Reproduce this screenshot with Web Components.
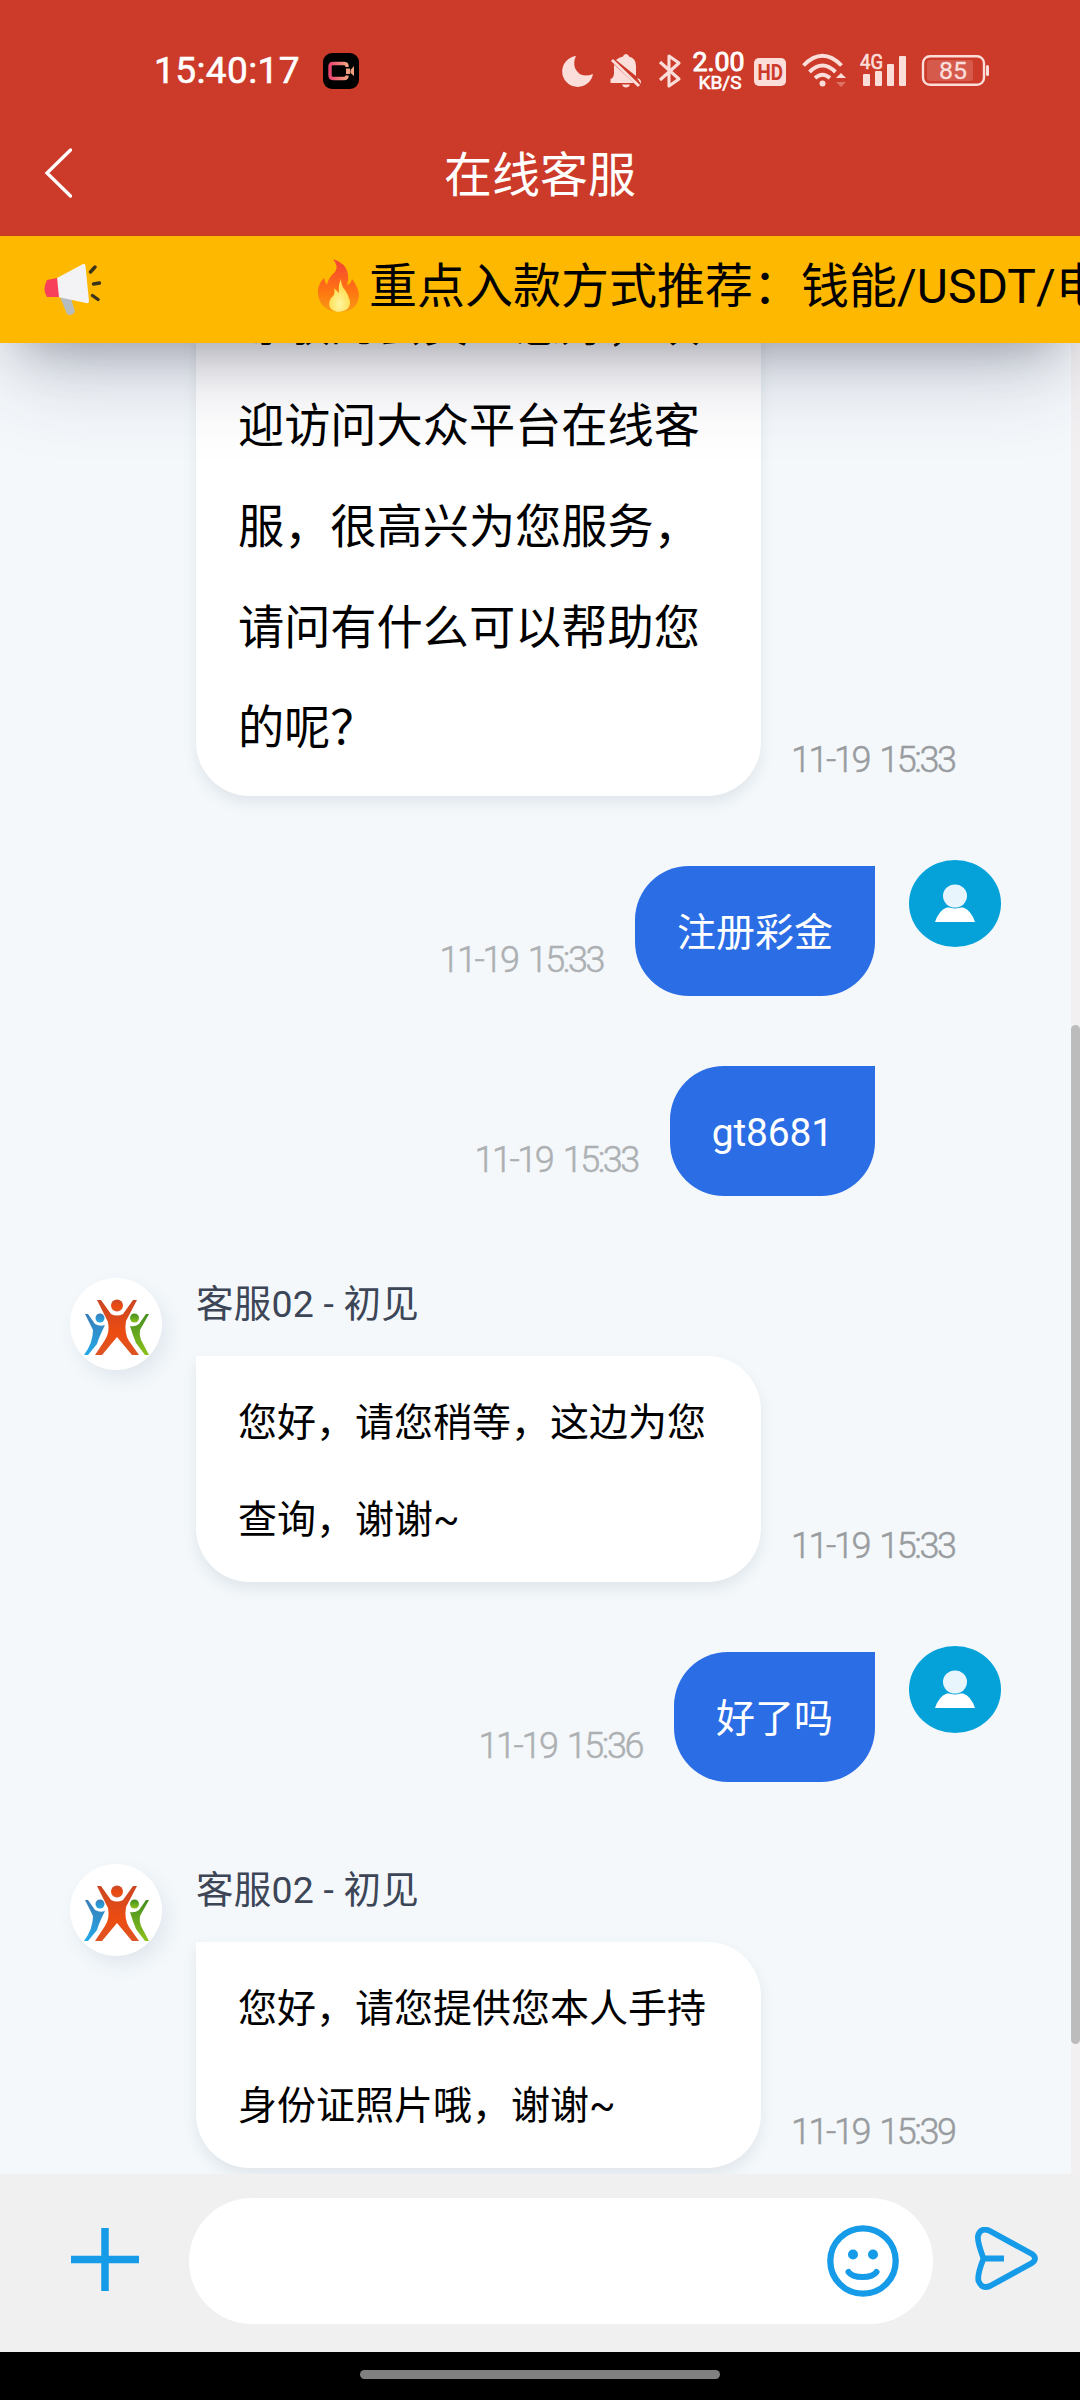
<!DOCTYPE html>
<html lang="zh-CN">
<head>
<meta charset="utf-8">
<title>在线客服</title>
<style>
html,body{margin:0;padding:0;height:2400px;overflow:hidden;background:#f4f8fb}
body{font-family:Roboto,"Noto Sans CJK SC",sans-serif}
</style>
</head>
<body>
<chat-app></chat-app>
<script>
const define = (name, html) => {
  const t = document.createElement('template');
  t.innerHTML = html;
  customElements.define(name, class extends HTMLElement {
    constructor() {
      super();
      this.attachShadow({mode: 'open'}).append(t.content.cloneNode(true));
    }
  });
};

define('status-bar', `<style>
:host{display:flex;height:108px;padding:0 88px 0 154px;box-sizing:border-box;align-items:flex-start;color:#fff}
.clock{margin-top:50px;width:169px;flex:none;font:400 37px/42px Roboto;letter-spacing:.4px;-webkit-text-stroke:.6px #fff}
svg{display:block;overflow:visible;flex:none}
text{font-family:Roboto,sans-serif}
.rec{margin-top:53px}
.right{margin-left:204px;margin-top:53px;flex:none}
</style>
<div class="clock">15:40:17</div>
<svg class="rec" width="36" height="36" viewBox="0 0 36 36"><defs><linearGradient id="g" x2="1" y2="0"><stop stop-color="#e8446f"/><stop offset="1" stop-color="#f3a483"/></linearGradient></defs><rect width="36" height="36" rx="9"/><path d="M24 14V13Q24 10.500 21 10.500H10Q7 10.500 7 13.500V22Q7 25.500 10 25.500H21Q24 25.500 24 22.500" fill="none" stroke="url(#g)" stroke-width="3.400"/><path d="M23 15.500H27V21H23ZM27.500 17L31 13V23L27.500 20Z" fill="#f0a080"/></svg>
<svg class="right" width="427" height="36" viewBox="563 53 427 36" fill="#fbdeda">
<path d="M576 56A15.500 15.500 0 1 0 593 74Q580 79 575 68Q573 62 576 56Z"/>
<path d="M616 60Q619 57 623 56.500Q623.500 54 626 54Q628.500 54 629 56.500Q636 58 636 66V76ZM613.500 64L634 83H610.500V79Q614 78 614 73V64ZM637 78Q641 79 641 82V84ZM622 84.500H630Q629 87.500 626 87.500Q623 87.500 622 84.500Z"/>
<path d="M612 60L639 86" stroke="#fbdeda" stroke-width="3"/>
<path d="M660 62L679 79L669 86V56L679 63L660 80" fill="none" stroke="#fbdeda" stroke-width="3.100" stroke-linejoin="round"/>
<g fill="#fff" stroke="#fff" stroke-width=".9"><text x="692.500" y="71" font-size="25.500" textLength="52" lengthAdjust="spacingAndGlyphs">2.00</text><text x="698.500" y="88.500" font-size="18.500" stroke-width=".6" textLength="43" lengthAdjust="spacingAndGlyphs">KB/S</text></g>
<rect x="754" y="58" width="32" height="28" rx="5"/>
<text x="757.500" y="80" font-size="22.500" font-weight="700" fill="#cc3a29" textLength="25.500" lengthAdjust="spacingAndGlyphs">HD</text>
<g fill="none" stroke="#fbdeda" stroke-width="3.900"><path d="M803.500 65.500Q822.500 46 841.500 65.500"/><path d="M809.500 72Q822.500 59 835.500 72"/><path d="M815 78Q822.500 71.500 830 78"/></g>
<circle cx="822.500" cy="83.500" r="3"/><path d="M836 78L841 73L846 78Z"/><path d="M836 82H846L841 87Z" opacity=".35"/>
<text x="860" y="69" font-size="21" stroke="#fbdeda" stroke-width=".7" textLength="23" lengthAdjust="spacingAndGlyphs">4G</text>
<rect x="863" y="74" width="7" height="12" rx="1"/><rect x="875" y="71" width="7" height="15" rx="1"/><rect x="887" y="64" width="7" height="22" rx="1"/><rect x="899" y="56" width="7" height="30" rx="1"/>
<rect x="923" y="56.200" width="61" height="28.600" rx="7" fill="none" stroke="#fbdeda" stroke-width="2.400"/>
<rect x="927" y="60" width="46" height="21" rx="3" opacity=".2"/>
<rect x="986" y="65" width="3" height="11" rx="1.500"/>
<text x="939" y="79" font-size="24" textLength="28" lengthAdjust="spacingAndGlyphs" stroke="#fbdeda" stroke-width=".3">85</text>
</svg>`);

define('title-bar', `<style>
:host{display:grid;grid-template-columns:120px 1fr 120px;align-items:center;height:128px;color:#fff}
svg{margin-left:44px;margin-top:2px;display:block}
h1{margin:0;text-align:center;font-weight:400;font-size:48px;line-height:60px;padding-top:8px}
</style>
<svg width="28" height="50" viewBox="0 0 28 50" fill="none" stroke="#fff" stroke-width="3.300" stroke-linecap="round"><path d="M26.500 2L3 25L26.500 48"/></svg>
<h1><slot></slot></h1>`);

define('notice-bar', `<style>
:host{display:flex;height:107px;background:#ffb800;color:#000;align-items:center;overflow:hidden}
.horn{margin-left:43px;flex:none}
.run{display:flex;align-items:center;margin-left:216px;white-space:nowrap;font-size:48px;line-height:60px}
.run svg{flex:none;margin:-7px 8px 0 0}
.run span{padding-bottom:5px}
svg{display:block}
</style>
<svg class="horn" width="58" height="56" viewBox="43 261 58 56" style="margin-top:-2px">
<path d="M60 297L67 314Q71 317 75 312L71 298Z" fill="#b5bcbf"/>
<path d="M57 278L83 264Q85 263 85.500 266L89 301Q89 304 86 303L58 297Z" fill="#f3f2f4"/>
<path d="M57 278L47 280Q42 290 47 297L59 297Z" fill="#f8405a"/>
<path d="M90.500 272L95 267M93.500 284L99.500 283M92.500 295.500L98 299.500" stroke="#3c3417" stroke-width="3.400" stroke-linecap="round"/></svg>
<div class="run"><svg width="44" height="56" viewBox="0 0 44 56"><defs><linearGradient id="f" x2="0" y2="1"><stop stop-color="#f44336"/><stop offset=".6" stop-color="#ff7412"/><stop offset="1" stop-color="#f79a14"/></linearGradient><radialGradient id="y" cy=".75"><stop stop-color="#fff6a0"/><stop offset="1" stop-color="#ffdf55"/></radialGradient></defs>
<path d="M16 1Q29 5 31 16Q32 22 30 27Q34 26 35 21Q42 30 42 38Q40 54 22 54Q3 53 1 36Q0 27 7 20Q8 25 10 27Q11 20 18 14Q22 8 16 1Z" fill="url(#f)"/>
<path d="M24 21Q21 27 22 35L17 30Q19 37 14 40Q8 51 21 54Q34 53 33 43Q31 36 28 32Q24 28 24 21Z" fill="url(#y)"/></svg><span><slot></slot></span></div>`);

define('agent-avatar', `<style>:host{display:block;width:92px;height:92px;border-radius:50%;background:#fff;box-shadow:6px 9px 18px rgba(70,95,125,.1)}svg{display:block}</style>
<svg width="92" height="92" viewBox="0 0 92 92"><defs><linearGradient id="r" x2="0" y2="1"><stop stop-color="#c94725"/><stop offset=".6" stop-color="#ed4c10"/><stop offset="1" stop-color="#dc5425"/></linearGradient><linearGradient id="b" x2="0" y2="1"><stop stop-color="#397db8"/><stop offset="1" stop-color="#23a9e6"/></linearGradient><linearGradient id="n" x2="0" y2="1"><stop stop-color="#448d21"/><stop offset="1" stop-color="#8bc21c"/></linearGradient></defs>
<g fill="url(#r)"><circle cx="47" cy="27.500" r="6"/><path d="M27 22H31L41 36Q47 39 53 36L63 22H67L56 43Q54 55 59 63L69 77H62L47 59L32 77H25L35 62Q40 54 38 44Z"/></g>
<g fill="url(#b)"><circle cx="30" cy="40" r="4.500"/><path d="M15 36H18L25 46Q30 49 35 47Q29 59 27 66L18 77H14Q23 65 23 52Z"/></g>
<g fill="url(#n)"><circle cx="64.500" cy="40" r="4.500"/><path d="M79 36H76L69 46Q65 49 60 48Q63 58 66 65L75 77H79L71 62Q69 57 70 52Z"/></g></svg>`);

define('user-avatar', `<style>:host{display:block;width:92px;height:87px}svg{display:block}</style>
<svg width="92" height="87" viewBox="0 0 92 87"><ellipse cx="46" cy="43.500" rx="46" ry="43.500" fill="#05a2da"/><path d="M38 47.500H54Q62 50 66 62H26Q30 50 38 47.500Z" fill="#fff"/><ellipse cx="46" cy="36" rx="13" ry="12.500" fill="#05a2da"/><ellipse cx="46" cy="36" rx="12" ry="11.500" fill="#e9f5fd"/></svg>`);

define('message-in', `<style>
:host{display:flex;padding-left:70px;margin-top:70px;flex:none}
.face{width:92px;margin-right:34px;padding-top:12px;flex:none}
.col{width:565px}
.name{height:90px;padding-top:16px;box-sizing:border-box;font-size:37.500px;line-height:44px;letter-spacing:.2px;color:#3d4657}
.bubble{padding:19px 42px 14px;background:#fff;border-radius:0 54px 54px 54px;color:#000;font-size:39px;line-height:96.500px;box-shadow:0 7px 14px rgba(60,90,110,.11)}
:host([large]) .bubble{font-size:46.200px;line-height:100.700px;padding:17px 42px 17px}
time{align-self:flex-end;margin:0 0 14px 30px;font-weight:300;-webkit-text-stroke:.5px;font-size:36px;line-height:44px;letter-spacing:-2.450px;word-spacing:4px;color:#999c9f;white-space:nowrap}
</style>
<div class="face"><slot name="face"></slot></div>
<div class="col"><div class="name"><slot name="name"></slot></div><div class="bubble"><slot></slot></div></div>
<time><slot name="time"></slot></time>`);

define('message-out', `<style>
:host{display:flex;justify-content:flex-end;padding-right:70px;margin-top:70px;height:130px;flex:none}
.bubble{padding:19px 42px 14px;background:#2b6de5;border-radius:54px 0 54px 54px;color:#fff;font-size:39px;line-height:97px;white-space:nowrap;letter-spacing:var(--track,0)}
time{align-self:flex-end;margin:0 32px 14px 0;font-weight:300;-webkit-text-stroke:.5px;font-size:36px;line-height:44px;letter-spacing:-2.450px;word-spacing:4px;color:#adb0b2;white-space:nowrap}
.face{width:92px;margin:-6px 0 0 34px;flex:none}
</style>
<time><slot name="time"></slot></time><div class="bubble"><slot></slot></div><div class="face"><slot name="face"></slot></div>`);

define('message-list', `<style>
:host{display:flex;height:1831px;background:#f4f8fb}
.scroll{flex:1;display:flex;flex-direction:column;justify-content:flex-end;overflow:hidden;padding-bottom:6px}
.track{width:9px;background:#f2f0f1;padding-top:682px;box-sizing:border-box}
.thumb{height:1019px;border-radius:5px;background:#bcbcbc}
</style><div class="scroll"><slot></slot></div><div class="track"><div class="thumb"></div></div>`);

define('compose-bar', `<style>
:host{display:flex;height:178px;background:#f0f0f0;padding:24px 42px 0 71px;box-sizing:border-box;align-items:flex-start}
svg{display:block;flex:none;fill:none;stroke:#159be8}
.plus{margin-top:30px}
.input{margin-left:50px;width:744px;height:126px;background:#fff;border-radius:63px;display:flex;align-items:center;justify-content:flex-end;padding-right:34px;box-sizing:border-box}
.send{margin:29px 0 0 42px}
</style>
<svg class="plus" width="68" height="63" viewBox="0 0 68 63" stroke-width="7.500"><path d="M34 0V63M0 31.500H68"/></svg>
<div class="input"><svg width="72" height="72" viewBox="0 0 72 72" stroke-width="6.300"><circle cx="36" cy="36" r="32.700"/><path d="M21.500 47Q25 52 35.500 52Q46 52 49.500 47" stroke-linecap="round" stroke-width="6"/><g fill="#159be8" stroke="none"><circle cx="26" cy="29.500" r="5"/><circle cx="46" cy="29.500" r="5"/></g></svg></div>
<svg class="send" width="63" height="63" viewBox="0 0 63 63" stroke-width="5.800" stroke-linejoin="round"><path d="M14 3.500L57 27Q63 31.500 57 36L15 59Q7 62.500 3.500 54Q2 48 8.500 31.500Q2 14 3 9Q5 .5 14 3.500ZM8.500 31.500H29"/></svg>`);

define('home-strip', `<style>:host{display:flex;height:48px;background:#000;justify-content:center;align-items:flex-start}i{width:360px;height:9px;margin-top:18px;border-radius:5px;background:#808080}</style><i></i>`);

define('chat-app', `<style>
:host{display:flex;flex-direction:column;width:1080px;height:2400px;overflow:hidden}
header{background:#cc3a29;position:relative;z-index:1;height:343px;box-shadow:0 39px 81px -15px rgba(50,50,93,.25),0 24px 48px -24px rgba(0,0,0,.3)}
compose-bar,home-strip{flex:none;position:relative;z-index:2}
</style>
<header><status-bar></status-bar><title-bar>在线客服</title-bar><notice-bar>重点入款方式推荐：钱能/USDT/电</notice-bar></header>
<message-list>
<message-in large>尊敬的会员！您好，欢迎访问大众平台在线客服，很高兴为您服务，请问有什么可以帮助您的呢？<span slot="time">11-19 15:33</span></message-in>
<message-out><span slot="time">11-19 15:33</span>注册彩金<user-avatar slot="face"></user-avatar></message-out>
<message-out style="--track:-.2px"><span slot="time">11-19 15:33</span>gt8681</message-out>
<message-in><agent-avatar slot="face"></agent-avatar><span slot="name">客服02 - 初见</span>您好，请您稍等，这边为您查询，谢谢~<span slot="time">11-19 15:33</span></message-in>
<message-out><span slot="time">11-19 15:36</span>好了吗<user-avatar slot="face"></user-avatar></message-out>
<message-in><agent-avatar slot="face"></agent-avatar><span slot="name">客服02 - 初见</span>您好，请您提供您本人手持身份证照片哦，谢谢~<span slot="time">11-19 15:39</span></message-in>
</message-list>
<compose-bar></compose-bar>
<home-strip></home-strip>`);
</script>
</body>
</html>
